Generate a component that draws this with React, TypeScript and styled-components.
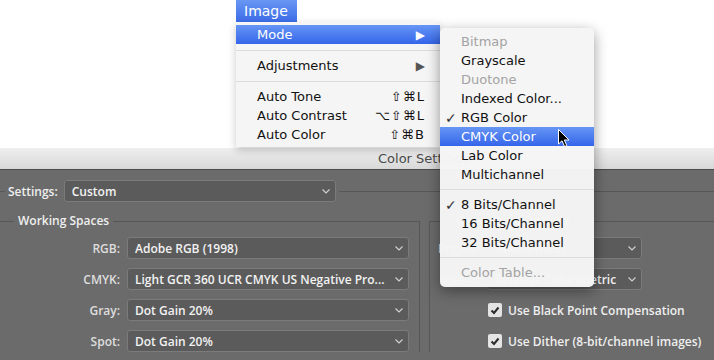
import React from 'react';
import styled, { createGlobalStyle, css } from 'styled-components';

const GlobalStyle = createGlobalStyle`
  html, body {
    margin: 0;
    padding: 0;
    background: #ffffff;
  }
  body {
    width: 714px;
    height: 360px;
    overflow: hidden;
  }
`;

const Root = styled.div`
  position: relative;
  display: flex;
  flex-direction: column;
  width: 714px;
  height: 360px;
  overflow: hidden;
`;

/* ---------- top menu bar ---------- */

const MenuBar = styled.div`
  height: 148px;
  flex: none;
  padding-left: 236px;
  box-sizing: border-box;
  background: #ffffff;
`;

const MenuTitle = styled.div`
  width: 61px;
  height: 22px;
  padding-left: 8px;
  box-sizing: border-box;
  background: linear-gradient(#6897f4, #3c6ce9);
  color: #ffffff;
  font-family: 'DejaVu Sans', sans-serif;
  font-size: 14px;
  font-weight: 500;
  line-height: 22px;
`;

const blueRow = css`
  background: linear-gradient(#6696f4, #3565e9);
  color: #ffffff;
`;

interface MenuProps {
  left: number;
  top: number;
  width: number;
}

const Menu = styled.div<MenuProps>`
  position: absolute;
  left: ${(p) => p.left}px;
  top: ${(p) => p.top}px;
  width: ${(p) => p.width}px;
  box-sizing: border-box;
  background: rgba(245, 245, 245, 0.98);
  font-family: 'DejaVu Sans', sans-serif;
  font-size: 13px;
  color: #111;
`;

const MainMenu = styled(Menu)`
  padding: 3px 0;
  box-shadow: 0 3px 8px rgba(0, 0, 0, 0.22);
`;

const SubMenu = styled(Menu)`
  padding: 4px 0 5px;
  border-radius: 5px;
  box-shadow: 0 4px 14px rgba(0, 0, 0, 0.4);
`;

interface ItemProps {
  active?: boolean;
  disabled?: boolean;
}

const MainItem = styled.div<ItemProps>`
  display: flex;
  align-items: center;
  height: 19px;
  padding: 0 15px 0 21px;
  ${(p) => p.active && blueRow}
`;

const ItemLabel = styled.span`
  flex: 1;
  white-space: nowrap;
`;

const Shortcut = styled.span`
  white-space: nowrap;
  letter-spacing: 1px;
`;

const Arrow = styled.span<ItemProps>`
  font-size: 12px;
  color: ${(p) => (p.active ? '#ffffff' : '#555')};
`;

const SubItem = styled.div<ItemProps>`
  display: flex;
  align-items: center;
  height: 19px;
  padding-left: 5px;
  color: ${(p) => (p.disabled ? '#a3a3a3' : '#111')};
  ${(p) => p.active && blueRow}
`;

const Check = styled.span`
  width: 16px;
  flex: none;
  font-size: 14px;
  color: #333;
`;

const Separator = styled.div<{ h: number }>`
  height: ${(p) => p.h}px;
  display: flex;
  align-items: center;

  &::after {
    content: '';
    flex: 1;
    height: 1px;
    background: #dcdcdc;
  }
`;

const Cursor = styled.svg`
  position: absolute;
  left: 557px;
  top: 128px;
`;

/* ---------- dialog ---------- */

const Dialog = styled.div`
  flex: 1;
  display: flex;
  flex-direction: column;
`;

const TitleBar = styled.div`
  height: 21px;
  flex: none;
  padding-left: 378px;
  background: linear-gradient(#efefef, #d8d8d8);
  border-bottom: 1px solid #4c4c4c;
  font-family: 'DejaVu Sans', sans-serif;
  font-size: 13px;
  line-height: 21px;
  color: #4a4a4a;
`;

const Body = styled.div`
  flex: 1;
  padding-top: 10px;
  background: #6b6b6b;
  font-family: 'Open Sans', sans-serif;
  font-size: 12px;
  font-weight: 600;
  color: #efefef;
`;

const SettingsRow = styled.div`
  display: flex;
  align-items: center;
  height: 22px;
`;

const Rule = styled.div<{ w?: number }>`
  height: 1px;
  background: #575757;
  ${(p) => (p.w ? `width: ${p.w}px;` : 'flex: 1;')}
`;

const SettingsLabel = styled.span`
  margin: 0 6px 0 3px;
`;

const SelectBox = styled.div<{ w: number }>`
  width: ${(p) => p.w}px;
  height: 22px;
  box-sizing: border-box;
  display: flex;
  align-items: center;
  padding: 0 5px 0 7px;
  background: #5b5b5b;
  border: 1px solid #7b7b7b;
  border-radius: 3px;
  color: #f2f2f2;
  white-space: nowrap;
  overflow: hidden;

  span {
    flex: 1;
    overflow: hidden;
  }
`;

const Groups = styled.div`
  display: flex;
  margin-top: 11px;
`;

const Group = styled.fieldset<{ side: 'left' | 'right' }>`
  margin: 0;
  box-sizing: border-box;
  border: 1px solid #575757;
  border-bottom: none;
  min-width: 0;
  ${(p) =>
    p.side === 'left'
      ? css`
          width: 420px;
          border-left: none;
          padding: 0 10px 0 0;
        `
      : css`
          flex: 1;
          margin-left: 9px;
          border-right: none;
          padding: 0 0 0 8px;
        `}

  legend {
    padding: 0 4px;
    margin-left: 14px;
    line-height: 16px;
  }
`;

const Rows = styled.div<{ labelWidth: number }>`
  display: grid;
  grid-template-columns: ${(p) => p.labelWidth}px auto;
  column-gap: 7px;
  row-gap: 9px;
  align-items: center;
  padding-top: 8px;
`;

const RowLabel = styled.span`
  text-align: right;
  color: #dedede;
`;

const CheckRow = styled.label`
  grid-column: 2;
  display: flex;
  align-items: center;
  height: 22px;
  padding-left: 1px;
  gap: 6px;
  white-space: nowrap;
`;

const CheckBox = styled.span`
  width: 14px;
  height: 14px;
  border-radius: 2px;
  background: #e4e4e4;
  display: flex;
  align-items: center;
  justify-content: center;
`;

function Chevron() {
  return (
    <svg width="8" height="5" viewBox="0 0 8 5">
      <polyline points="0.5,0.5 4,4 7.5,0.5" fill="none" stroke="#d0d0d0" strokeWidth="1.2" />
    </svg>
  );
}

function Select({ value, w }: { value: string; w: number }) {
  return (
    <SelectBox w={w}>
      <span>{value}</span>
      <Chevron />
    </SelectBox>
  );
}

function Checked({ label }: { label: string }) {
  return (
    <CheckRow>
      <CheckBox>
        <svg width="10" height="9" viewBox="0 0 10 9">
          <polyline points="1.5,4.5 4,7 8.5,1.5" fill="none" stroke="#2b2b2b" strokeWidth="2" />
        </svg>
      </CheckBox>
      {label}
    </CheckRow>
  );
}

const workingSpaces = [
  { label: 'RGB:', value: 'Adobe RGB (1998)' },
  { label: 'CMYK:', value: 'Light GCR 360 UCR CMYK US Negative Pro...' },
  { label: 'Gray:', value: 'Dot Gain 20%' },
  { label: 'Spot:', value: 'Dot Gain 20%' },
];

type ModeItem = { label: string; disabled?: boolean; checked?: boolean; active?: boolean } | 'sep';

const modes: ModeItem[] = [
  { label: 'Bitmap', disabled: true },
  { label: 'Grayscale' },
  { label: 'Duotone', disabled: true },
  { label: 'Indexed Color...' },
  { label: 'RGB Color', checked: true },
  { label: 'CMYK Color', active: true },
  { label: 'Lab Color' },
  { label: 'Multichannel' },
  'sep',
  { label: '8 Bits/Channel', checked: true },
  { label: '16 Bits/Channel' },
  { label: '32 Bits/Channel' },
  'sep',
  { label: 'Color Table...', disabled: true },
];

export default function App() {
  return (
    <Root>
      <GlobalStyle />
      <MenuBar>
        <MenuTitle>Image</MenuTitle>
      </MenuBar>

      <Dialog>
        <TitleBar>Color Settings</TitleBar>
        <Body>
          <SettingsRow>
            <Rule w={5} />
            <SettingsLabel>Settings:</SettingsLabel>
            <Select value="Custom" w={272} />
            <Rule style={{ marginLeft: 3 }} />
          </SettingsRow>

          <Groups>
            <Group side="left">
              <legend>Working Spaces</legend>
              <Rows labelWidth={120}>
                {workingSpaces.map((ws) => (
                  <React.Fragment key={ws.label}>
                    <RowLabel>{ws.label}</RowLabel>
                    <Select value={ws.value} w={282} />
                  </React.Fragment>
                ))}
              </Rows>
            </Group>
            <Group side="right">
              <legend>Conversion Options</legend>
              <Rows labelWidth={42}>
                <RowLabel>Engine:</RowLabel>
                <Select value="Adobe (ACE)" w={155} />
                <RowLabel>Intent:</RowLabel>
                <Select value="Relative Colorimetric" w={155} />
                <Checked label="Use Black Point Compensation" />
                <Checked label="Use Dither (8-bit/channel images)" />
              </Rows>
            </Group>
          </Groups>
        </Body>
      </Dialog>

      <MainMenu left={236} top={22} width={204}>
        <MainItem active>
          <ItemLabel>Mode</ItemLabel>
          <Arrow active>▶</Arrow>
        </MainItem>
        <Separator h={12} />
        <MainItem>
          <ItemLabel>Adjustments</ItemLabel>
          <Arrow>▶</Arrow>
        </MainItem>
        <Separator h={12} />
        <MainItem>
          <ItemLabel>Auto Tone</ItemLabel>
          <Shortcut>⇧⌘L</Shortcut>
        </MainItem>
        <MainItem>
          <ItemLabel>Auto Contrast</ItemLabel>
          <Shortcut>⌥⇧⌘L</Shortcut>
        </MainItem>
        <MainItem>
          <ItemLabel>Auto Color</ItemLabel>
          <Shortcut>⇧⌘B</Shortcut>
        </MainItem>
      </MainMenu>

      <SubMenu left={440} top={28} width={154}>
        {modes.map((m, i) =>
          m === 'sep' ? (
            <Separator key={i} h={11} />
          ) : (
            <SubItem key={m.label} active={m.active} disabled={m.disabled}>
              <Check>{m.checked ? '✓' : ''}</Check>
              <ItemLabel>{m.label}</ItemLabel>
            </SubItem>
          )
        )}
      </SubMenu>

      <Cursor width="14" height="21" viewBox="0 0 14 21">
        <path d="M1.5 1.5 L1.5 16 L5 12.8 L7.6 18.6 L9.8 17.6 L7.3 12 L12 12 Z" fill="#000" stroke="#fff" strokeWidth="1" />
      </Cursor>
    </Root>
  );
}
